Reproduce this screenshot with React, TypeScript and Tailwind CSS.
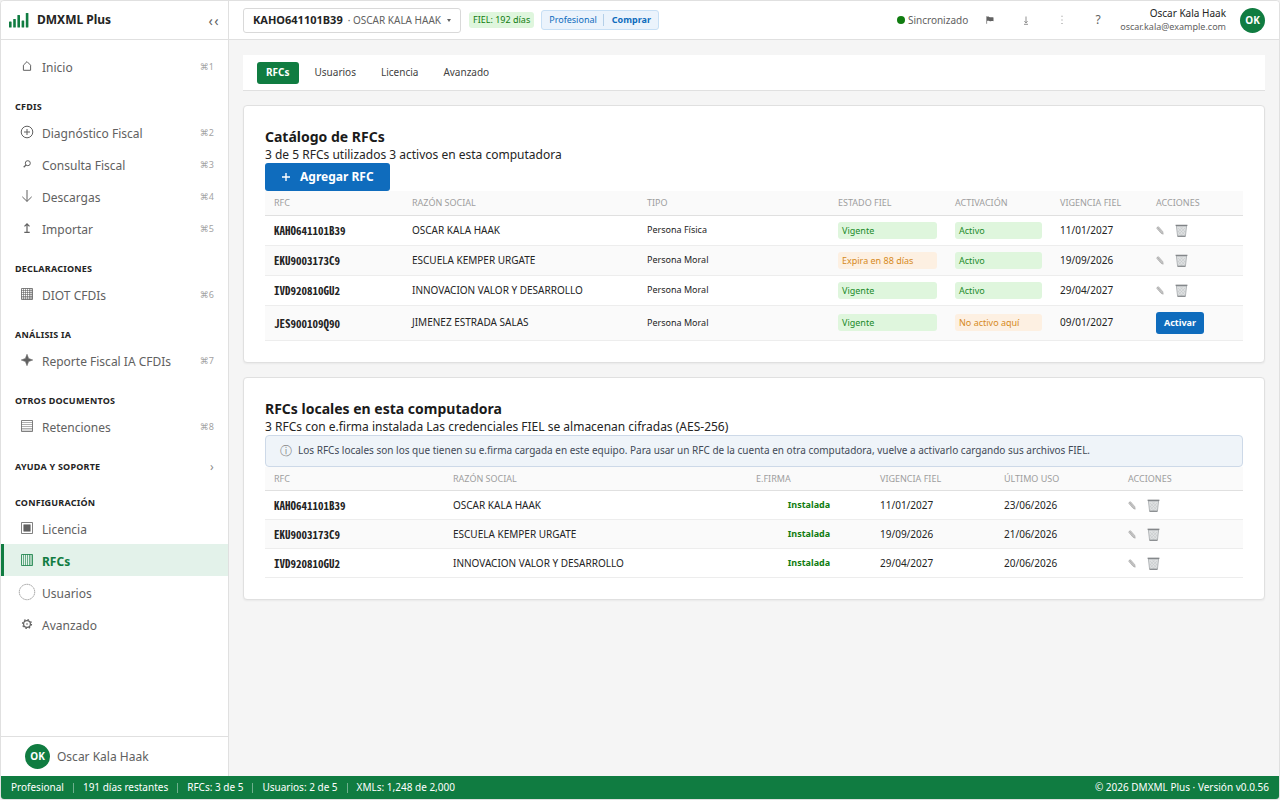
import React from "react";
import clsx from "clsx";

type NavItem = { icon: string; label: string; shortcut?: string };

const sections: { title: string; items: NavItem[] }[] = [
  {
    title: "CFDIS",
    items: [
      { icon: "plus", label: "Diagnóstico Fiscal", shortcut: "⌘2" },
      { icon: "search", label: "Consulta Fiscal", shortcut: "⌘3" },
      { icon: "down", label: "Descargas", shortcut: "⌘4" },
      { icon: "up", label: "Importar", shortcut: "⌘5" },
    ],
  },
  {
    title: "DECLARACIONES",
    items: [{ icon: "grid", label: "DIOT CFDIs", shortcut: "⌘6" }],
  },
  {
    title: "ANÁLISIS IA",
    items: [{ icon: "star", label: "Reporte Fiscal IA CFDIs", shortcut: "⌘7" }],
  },
  {
    title: "OTROS DOCUMENTOS",
    items: [{ icon: "rows", label: "Retenciones", shortcut: "⌘8" }],
  },
];

const settings: NavItem[] = [
  { icon: "square", label: "Licencia" },
  { icon: "columns", label: "RFCs" },
  { icon: "circle", label: "Usuarios" },
  { icon: "gear", label: "Avanzado" },
];

const catalog = [
  { rfc: "KAHO641101B39", name: "OSCAR KALA HAAK", type: "Persona Física", fiel: "Vigente", active: true, date: "11/01/2027" },
  { rfc: "EKU9003173C9", name: "ESCUELA KEMPER URGATE", type: "Persona Moral", fiel: "Expira en 88 días", active: true, date: "19/09/2026" },
  { rfc: "IVD920810GU2", name: "INNOVACION VALOR Y DESARROLLO", type: "Persona Moral", fiel: "Vigente", active: true, date: "29/04/2027" },
  { rfc: "JES900109Q90", name: "JIMENEZ ESTRADA SALAS", type: "Persona Moral", fiel: "Vigente", active: false, date: "09/01/2027" },
];

const locals = [
  { rfc: "KAHO641101B39", name: "OSCAR KALA HAAK", date: "11/01/2027", used: "23/06/2026" },
  { rfc: "EKU9003173C9", name: "ESCUELA KEMPER URGATE", date: "19/09/2026", used: "21/06/2026" },
  { rfc: "IVD920810GU2", name: "INNOVACION VALOR Y DESARROLLO", date: "29/04/2027", used: "20/06/2026" },
];

const icons: Record<string, React.ReactNode> = {
  home: <path d="M5.4 13.3V8.2L9 4.6l3.6 3.6v5.1Z" />,
  plus: (
    <>
      <circle cx="9" cy="9" r="5.8" />
      <path d="M9 6v6M6 9h6" />
    </>
  ),
  search: (
    <>
      <circle cx="9.8" cy="8.2" r="2.5" />
      <path d="M8 10.1 5.7 12.2" strokeWidth="1.3" />
    </>
  ),
  down: <path d="M9 3v11.4M4.3 9.8 9 14.4l4.7-4.6" />,
  up: <path d="M9 13V5M6.5 7.4 9 4.9l2.5 2.5M6.3 13.4h5.4" strokeWidth="1.2" />,
  grid: (
    <>
      <path d="M3.5 3.5h11v11h-11Z" strokeWidth=".8" />
      <path d="M5.5 3.5v11M7.5 3.5v11M9.5 3.5v11M11.5 3.5v11M13 3.5v11M3.5 5.5h11M3.5 7.5h11M3.5 9.5h11M3.5 11.5h11M3.5 13h11" strokeWidth=".6" />
    </>
  ),
  star: <path d="M9 3.2 10.6 7.4 14.8 9l-4.2 1.6L9 14.8l-1.6-4.2L3.2 9l4.2-1.6Z" fill="currentColor" strokeWidth=".5" />,
  rows: (
    <>
      <path d="M3.5 3.5h11v11h-11Z" strokeWidth=".8" />
      <path d="M3.5 5.5h11M3.5 7.5h11M3.5 9.5h11M3.5 11.5h11M3.5 13h11" strokeWidth=".5" />
    </>
  ),
  square: (
    <>
      <path d="M3.5 3.5h11v11h-11Z" strokeWidth=".8" />
      <path d="M5.7 5.7h6.6v6.6H5.7Z" fill="currentColor" strokeWidth=".5" />
    </>
  ),
  columns: (
    <>
      <path d="M3.5 3.5h11v11h-11Z" strokeWidth=".8" />
      <path d="M5.5 3.5v11M7.5 3.5v11M9.5 3.5v11M11.5 3.5v11M13 3.5v11" strokeWidth=".6" />
    </>
  ),
  circle: <circle cx="9" cy="9" r="7.7" strokeWidth=".6" strokeDasharray="1.4 .5" />,
  gear: (
    <>
      <circle cx="9" cy="9" r="3.4" strokeWidth="1.2" />
      <circle cx="9" cy="9" r=".8" fill="currentColor" stroke="none" />
      <circle cx="9" cy="9" r="4.5" strokeWidth="1.2" strokeDasharray="1.5 2.03" />
    </>
  ),
};

function Icon({ name }: { name: string }) {
  return (
    <svg width="18" height="18" viewBox="0 0 18 18" fill="none" stroke="currentColor" aria-hidden="true" className="shrink-0">
      {icons[name]}
    </svg>
  );
}

function Logo() {
  return (
    <svg width="20" height="16" viewBox="0 0 20 16" fill="#107c41" aria-hidden="true">
      <rect x="0" y="9.5" width="2.6" height="6" rx=".6" />
      <rect x="4.2" y="7" width="2.6" height="8.5" rx=".6" />
      <rect x="8.4" y="3" width="2.6" height="12.5" rx=".6" />
      <rect x="12.6" y="8.4" width="2.6" height="7.1" rx=".6" />
      <rect x="16.8" y="1" width="2.6" height="14.5" rx=".6" />
    </svg>
  );
}

function Avatar() {
  return (
    <span className="flex size-[25px] shrink-0 items-center justify-center rounded-full bg-[#107c41] text-[10px] font-bold text-white">
      OK
    </span>
  );
}

function NavLink({ item, active }: { item: NavItem; active?: boolean }) {
  return (
    <a
      href="#"
      className={clsx(
        "flex h-8 items-center border-l-[3px] px-[14px] text-[12px]",
        active
          ? "border-[#107c41] bg-[#e3f2ea] font-bold text-[#107c41]"
          : "border-transparent text-[#616161]"
      )}
    >
      <Icon name={item.icon} />
      <span className="ml-[6px] flex-1 pt-[3px] whitespace-nowrap">{item.label}</span>
      {item.shortcut && (
        <span className="pt-[2px] text-[9px] text-[#a3a3a3]">{item.shortcut}</span>
      )}
    </a>
  );
}

function SectionTitle({ children }: { children: React.ReactNode }) {
  return (
    <h3 className="flex h-[34px] items-center pt-4 pl-[14px] text-[9px] font-bold tracking-wide text-[#242424]">
      {children}
    </h3>
  );
}

function Sidebar() {
  return (
    <aside className="flex w-[228px] shrink-0 flex-col border-r border-[#e0e0e0] bg-white">
      <div className="flex h-[39px] items-center border-b border-[#e0e0e0] px-2">
        <Logo />
        <span className="ml-2 flex-1 text-[12px] font-bold text-[#242424]">
          DMXML Plus
        </span>
        <button aria-label="Contraer menú" className="text-[14px] tracking-widest text-[#616161]">
          ‹‹
        </button>
      </div>
      <nav className="flex-1 pt-[10px]">
        <NavLink item={{ icon: "home", label: "Inicio", shortcut: "⌘1" }} />
        {sections.map((section) => (
          <div key={section.title}>
            <SectionTitle>{section.title}</SectionTitle>
            {section.items.map((item) => (
              <NavLink key={item.label} item={item} />
            ))}
          </div>
        ))}
        <button className="mb-0.5 flex h-[34px] w-full items-center justify-between px-[14px] pt-4 text-[9px] font-bold tracking-wide text-[#242424]">
          AYUDA Y SOPORTE
          <span className="text-[12px] font-normal text-[#8a8a8a]">›</span>
        </button>
        <SectionTitle>CONFIGURACIÓN</SectionTitle>
        {settings.map((item) => (
          <NavLink key={item.label} item={item} active={item.label === "RFCs"} />
        ))}
      </nav>
      <div className="flex h-10 items-center gap-[7px] border-t border-[#e0e0e0] pl-6 text-[12px] text-[#616161]">
        <Avatar />
        Oscar Kala Haak
      </div>
    </aside>
  );
}

function Header() {
  return (
    <header className="flex h-[39px] items-center border-b border-[#e0e0e0] bg-white px-[14px]">
      <button className="flex h-[25px] items-center rounded-[3px] border border-[#d9d9d9] px-[9px] text-[10px] text-[#616161]">
        <span className="text-[11px] font-bold text-[#242424]">KAHO641101B39</span>
        <span className="ml-[5px]">· OSCAR KALA HAAK</span>
        <svg width="4" height="3" viewBox="0 0 4 3" fill="currentColor" className="ml-[6px]">
          <path d="M0 0h4L2 3Z" />
        </svg>
      </button>
      <span className="ml-2 rounded-[3px] bg-[#dff6dd] px-1 text-[9px] leading-4 text-[#107c10]">
        FIEL: 192 días
      </span>
      <div className="ml-[7px] flex h-5 items-center rounded-[3px] border border-[#c7dff5] bg-[#ebf3fc] px-[7px] text-[9px] text-[#0f6cbd]">
        Profesional
        <span className="ml-[6px] h-3 w-px bg-[#b4cfe8]" />
        <button className="ml-2 font-bold">Comprar</button>
      </div>
      <div className="ml-auto flex items-center">
        <span className="size-2 rounded-full bg-[#107c10]" />
        <span className="ml-[3px] pt-px text-[10px] text-[#616161]">Sincronizado</span>
        <div className="ml-1 flex text-[12px] text-[#616161]">
          <button aria-label="Avisos" className="flex w-9 items-center justify-center">
            <svg width="8" height="8" viewBox="0 0 8 8" fill="currentColor">
              <path d="M.4.3h.7v7.4H.4ZM1.1.8C2.6 0 3.6 1.6 5 1.3c.8-.1 1.6-.2 2.5.2v3.8c-1.2-.4-1.9-.1-2.7 0C3.5 5.4 2.7 4.2 1.1 4.9Z" />
            </svg>
          </button>
          <button aria-label="Descargas" className="flex w-9 items-center justify-center">
            <svg width="6" height="9" viewBox="0 0 6 9" fill="none" stroke="currentColor" strokeWidth=".7">
              <path d="M3 .5v6.2M1.4 5.2 3 6.9l1.6-1.7M1 8.3h4" />
            </svg>
          </button>
          <button aria-label="Más" className="flex w-9 items-center justify-center">
            <svg width="2" height="10" viewBox="0 0 2 10" fill="currentColor" opacity=".7">
              <path d="M.5.8h1v1h-1ZM.5 4.4h1v1h-1ZM.5 8h1v1h-1Z" />
            </svg>
          </button>
          <button aria-label="Ayuda" className="w-9">?</button>
        </div>
        <div className="mr-[14px] ml-1 text-right leading-[13px]">
          <div className="text-[10px] text-[#242424]">Oscar Kala Haak</div>
          <div className="text-[9px] text-[#616161]">oscar.kala@example.com</div>
        </div>
        <Avatar />
      </div>
    </header>
  );
}

function Badge({ warn, children }: { warn?: boolean; children: React.ReactNode }) {
  return (
    <span
      className={clsx(
        "block h-[17px] rounded-[3px] px-1 leading-[17px]",
        warn ? "bg-[#fdf0e2] text-[#d68a1c]" : "bg-[#dff6dd] text-[#1b8a2a]"
      )}
    >
      {children}
    </span>
  );
}

function RowActions() {
  return (
    <div className="flex items-center gap-[11px]">
      <button aria-label="Editar" className="flex w-2 justify-center">
        <svg width="8" height="9" viewBox="0 0 8 9" fill="#d4d4d4" stroke="#8a8a8a" strokeWidth=".5">
          <path d="M1 1.4 2.6.8 6.8 5.7 7.2 8.2 5 7.2.9 2.5Z" />
          <path d="M1.8 1.7 5.9 6.7" fill="none" />
        </svg>
      </button>
      <button aria-label="Eliminar">
        <svg width="13" height="13" viewBox="0 0 13 13">
          <path d="M1.4 2h10.2l-1.2 10.4H2.6Z" fill="#dfe1e2" stroke="#9a9da0" strokeWidth=".7" />
          <path d="M3 4l6.8 6.8M5.5 3.2l4.8 4.8M2.8 7l4.4 4.8M10 4l-6.8 6.8M7.5 3.2 2.9 8M10.2 7l-4.4 4.8" stroke="#bfc2c4" strokeWidth=".5" />
          <path d="M.6 1.3h11.8" stroke="#808386" strokeWidth="1.3" />
          <path d="M2.7 12.2h7.6" stroke="#737679" strokeWidth=".9" />
        </svg>
      </button>
    </div>
  );
}

function TableHead({ labels }: { labels: string[] }) {
  return (
    <thead>
      <tr className="h-6 border-b border-[#e0e0e0] bg-[#fafafa] text-left text-[9px] text-[#9e9e9e]">
        {labels.map((label) => (
          <th key={label} className="px-[9px] font-normal">
            {label}
          </th>
        ))}
      </tr>
    </thead>
  );
}

const rfcCell = "px-[9px] font-['Noto_Sans_Mono_CJK_JP','DejaVu_Sans_Mono',monospace] text-[11px] leading-4 font-bold";

function Card({ title, text, children }: { title: string; text: string; children: React.ReactNode }) {
  return (
    <section className="mt-[14px] rounded-[4px] border border-[#e0e0e0] bg-white p-[21px] shadow-xs">
      <h2 className="text-[14px] leading-[19px] font-bold text-[#1a1a1a]">{title}</h2>
      <p className="text-[12px] leading-[17px]">{text}</p>
      {children}
    </section>
  );
}

function Catalog() {
  return (
    <Card title="Catálogo de RFCs" text="3 de 5 RFCs utilizados 3 activos en esta computadora">
      <button className="flex h-7 items-center gap-[9px] rounded-[3px] bg-[#0f6cbd] px-4 text-[12px] font-bold text-white">
        <svg width="10" height="10" viewBox="0 0 10 10" stroke="currentColor" strokeWidth="1.4">
          <path d="M5 1v8M1 5h8" />
        </svg>
        Agregar RFC
      </button>
      <table className="w-full table-fixed text-[10px]">
        <colgroup>
          <col className="w-[138px]" />
          <col />
          <col className="w-[191px]" />
          <col className="w-[117px]" />
          <col className="w-[105px]" />
          <col className="w-24" />
          <col className="w-24" />
        </colgroup>
        <TableHead labels={["RFC", "RAZÓN SOCIAL", "TIPO", "ESTADO FIEL", "ACTIVACIÓN", "VIGENCIA FIEL", "ACCIONES"]} />
        <tbody>
          {catalog.map((row) => (
            <tr
              key={row.rfc}
              className={clsx(
                "border-b border-[#ededed] even:bg-[#fafafa]",
                row.active ? "h-[30px]" : "h-[35px]"
              )}
            >
              <td className={rfcCell}>{row.rfc}</td>
              <td className="px-[9px]">{row.name}</td>
              <td className="px-[9px] text-[9px]">{row.type}</td>
              <td className="px-[9px] text-[9px]">
                <Badge warn={row.fiel !== "Vigente"}>{row.fiel}</Badge>
              </td>
              <td className="px-[9px] text-[9px]">
                <Badge warn={!row.active}>{row.active ? "Activo" : "No activo aquí"}</Badge>
              </td>
              <td className="px-[9px]">{row.date}</td>
              <td className="px-[9px]">
                {row.active ? (
                  <RowActions />
                ) : (
                  <button className="block h-[22px] rounded-[3px] bg-[#0f6cbd] px-2 text-[9px] font-bold text-white">
                    Activar
                  </button>
                )}
              </td>
            </tr>
          ))}
        </tbody>
      </table>
    </Card>
  );
}

function LocalRfcs() {
  return (
    <Card
      title="RFCs locales en esta computadora"
      text="3 RFCs con e.firma instalada Las credenciales FIEL se almacenan cifradas (AES-256)"
    >
      <div className="flex h-8 items-center rounded-[4px] border border-[#cdd9e8] bg-[#eff4f9] px-[14px] text-[10px] text-[#424a57]">
        <span className="mr-[6px] text-[12px] text-[#8a8a8a]">ⓘ</span>
        Los RFCs locales son los que tienen su e.firma cargada en este equipo. Para usar un RFC de
        la cuenta en otra computadora, vuelve a activarlo cargando sus archivos FIEL.
      </div>
      <table className="w-full table-fixed text-[10px]">
        <colgroup>
          <col className="w-[179px]" />
          <col />
          <col className="w-[124px]" />
          <col className="w-[124px]" />
          <col className="w-[124px]" />
          <col className="w-[124px]" />
        </colgroup>
        <TableHead labels={["RFC", "RAZÓN SOCIAL", "E.FIRMA", "VIGENCIA FIEL", "ÚLTIMO USO", "ACCIONES"]} />
        <tbody>
          {locals.map((row) => (
            <tr key={row.rfc} className="h-[29px] border-b border-[#ededed] even:bg-[#fafafa]">
              <td className={rfcCell}>{row.rfc}</td>
              <td className="px-[9px]">{row.name}</td>
              <td className="px-[9px] text-center text-[9px] font-bold text-[#107c10]">Instalada</td>
              <td className="px-[9px]">{row.date}</td>
              <td className="px-[9px]">{row.used}</td>
              <td className="px-[9px]">
                <RowActions />
              </td>
            </tr>
          ))}
        </tbody>
      </table>
    </Card>
  );
}

function Tabs() {
  return (
    <nav className="flex h-9 items-center gap-[7px] border-b border-[#e0e0e0] bg-white px-[14px] text-[10px] text-[#424242]">
      <button className="h-[22px] rounded-[3px] bg-[#107c41] px-[9px] font-bold text-white">RFCs</button>
      <button className="h-[22px] px-[9px]">Usuarios</button>
      <button className="h-[22px] px-[9px]">Licencia</button>
      <button className="h-[22px] px-[9px]">Avanzado</button>
    </nav>
  );
}

function StatusBar() {
  const items = ["Profesional", "191 días restantes", "RFCs: 3 de 5", "Usuarios: 2 de 5", "XMLs: 1,248 de 2,000"];
  return (
    <footer className="flex h-[23px] items-center justify-between bg-[#107c41] px-[10px] text-[10px] text-white">
      <div className="flex items-center">
        {items.map((item, i) => (
          <React.Fragment key={item}>
            {i > 0 && <span className="mx-[9px] h-[10px] w-px bg-[#6fb08d]" />}
            <span>{item}</span>
          </React.Fragment>
        ))}
      </div>
      <span>© 2026 DMXML Plus · Versión v0.0.56</span>
    </footer>
  );
}

export default function App() {
  return (
    <div className="bg-[#f0f0f0] font-['Noto_Sans','DejaVu_Sans',sans-serif] text-[#242424]">
      <div className="flex min-h-screen flex-col overflow-hidden rounded-[4px] border border-[#e0e0e0] bg-[#f5f5f5]">
        <div className="flex flex-1">
          <Sidebar />
          <div className="flex min-w-0 flex-1 flex-col">
            <Header />
            <main className="p-[14px] pt-[15px]">
              <Tabs />
              <Catalog />
              <LocalRfcs />
            </main>
          </div>
        </div>
        <StatusBar />
      </div>
    </div>
  );
}
